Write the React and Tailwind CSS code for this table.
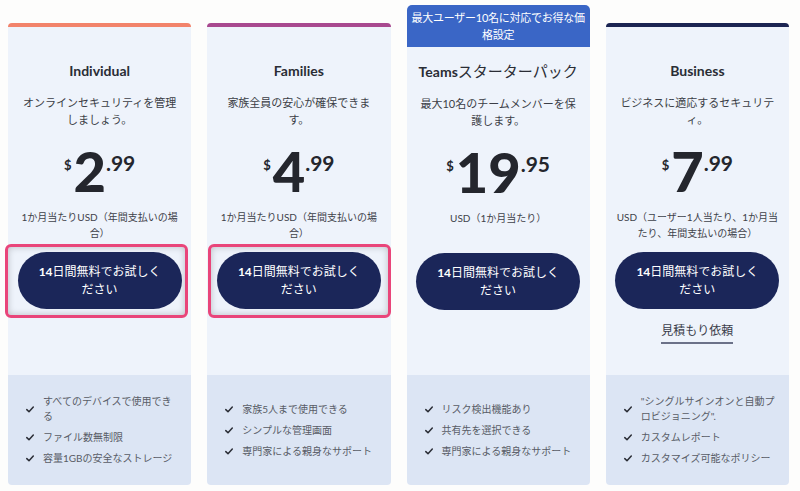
import React from 'react';

const plans = [
  {
    name: 'Individual',
    bar: 'bg-[#f2836b]',
    desc: 'オンラインセキュリティを管理しましょう。',
    whole: '2',
    cents: '.99',
    note: '1か月当たりUSD（年間支払いの場合）',
    highlight: 'left-[-13px] right-[-6px]',
    features: ['すべてのデバイスで使用できる', 'ファイル数無制限', '容量1GBの安全なストレージ'],
  },
  {
    name: 'Families',
    bar: 'bg-[#a8498f]',
    desc: '家族全員の安心が確保できます。',
    whole: '4',
    cents: '.99',
    note: '1か月当たりUSD（年間支払いの場合）',
    highlight: 'left-[-9px] right-[-10px]',
    features: ['家族5人まで使用できる', 'シンプルな管理画面', '専門家による親身なサポート'],
  },
  {
    name: 'Teams',
    suffix: 'スターターパック',
    banner: '最大ユーザー10名に対応でお得な価格設定',
    desc: '最大10名のチームメンバーを保護します。',
    whole: '19',
    cents: '.95',
    note: 'USD（1か月当たり）',
    features: ['リスク検出機能あり', '共有先を選択できる', '専門家による親身なサポート'],
  },
  {
    name: 'Business',
    bar: 'bg-[#1b2452]',
    desc: 'ビジネスに適応するセキュリティ。',
    whole: '7',
    cents: '.99',
    note: 'USD（ユーザー1人当たり、1か月当たり、年間支払いの場合）',
    noteWide: true,
    quote: true,
    features: ['"シングルサインオンと自動プロビジョニング".', 'カスタムレポート', 'カスタマイズ可能なポリシー'],
  },
];

function Check() {
  return (
    <svg width="8" height="7" viewBox="0 0 8 7" className="shrink-0">
      <path d="M0.8 3.6 L3 5.8 L7.3 1" fill="none" stroke="#2b2e36" strokeWidth="1.5" strokeLinecap="round" strokeLinejoin="round" />
    </svg>
  );
}

function PlanCard({ plan }) {
  return (
    <div className="flex h-[480px] flex-col">
      {plan.banner ? (
        <div className="flex h-[42px] items-center justify-center rounded-t-[5px] bg-[#3a66c6] text-center text-[11px] leading-[17px] tracking-[-0.25px] text-white">
          {plan.banner}
        </div>
      ) : (
        <>
          <div className="h-[18px]" />
          <div className={`h-[4px] rounded-t-[4px] ${plan.bar}`} />
        </>
      )}

      {/* body */}
      <div className={`flex flex-1 flex-col items-center bg-[#eef3fb] px-3 text-center ${plan.banner ? 'pt-[14px]' : 'pt-[34px]'}`}>
        <h3 className="text-[14px] font-bold leading-5 text-[#2a2d35]">
          {plan.name}
          {plan.suffix && <span className="text-[15px] font-normal">{plan.suffix}</span>}
        </h3>
        <p className="mt-[13px] min-h-[34px] text-[11px] leading-[17px] text-[#3b3e46]">{plan.desc}</p>

        <div className="mt-[15px] flex h-[56px] items-start justify-center text-[#24262d]">
          <span className="mt-4 mr-[2px] text-[13px] font-bold leading-none">$</span>
          <span className="text-[56px] font-black leading-none">{plan.whole}</span>
          <span className="mt-[9px] text-[21px] font-bold leading-none">{plan.cents}</span>
        </div>

        <p className={`mt-[10px] min-h-[32px] text-[10px] leading-4 text-[#3f424a] ${plan.noteWide ? '-mx-1' : ''}`}>{plan.note}</p>

        <div className="relative mt-[11px] w-[164px]">
          {plan.highlight && (
            <div className={`pointer-events-none absolute top-[-8px] bottom-[-9px] rounded-[6px] border-[3px] border-[#e9457a] shadow-[inset_0_0_7px_rgba(0,0,0,0.22)] ${plan.highlight}`} />
          )}
          <button className="relative h-[57px] w-[164px] rounded-full bg-[#1b2659] px-[18px] text-[12px] leading-[18px] text-white">
            <span className="font-bold">14</span>日間無料でお試しください
          </button>
        </div>

        {plan.quote && (
          <a className="mt-[14px] border-b-2 border-[#6b7188] pb-[3px] text-[12px] leading-4 text-[#3a3d4a]">
            見積もり依頼
          </a>
        )}
      </div>

      {/* features */}
      <ul className="flex h-[110px] flex-col justify-center gap-[6px] rounded-b-[4px] bg-[#dce5f4] pl-[18px] pr-3">
        {plan.features.map((f) => (
          <li key={f} className="flex items-center gap-[9px] text-[10px] leading-[15px] text-[#585c66]">
            <Check />
            <span>{f}</span>
          </li>
        ))}
      </ul>
    </div>
  );
}

export default function App() {
  return (
    <div className="min-h-screen bg-[#fdfdfc] font-['Lato','Noto_Sans_CJK_JP',sans-serif]">
      <div className="grid grid-cols-4 gap-4 pl-2 pr-[11px] pt-[5px]">
        {plans.map((p) => (
          <PlanCard key={p.name} plan={p} />
        ))}
      </div>
    </div>
  );
}
